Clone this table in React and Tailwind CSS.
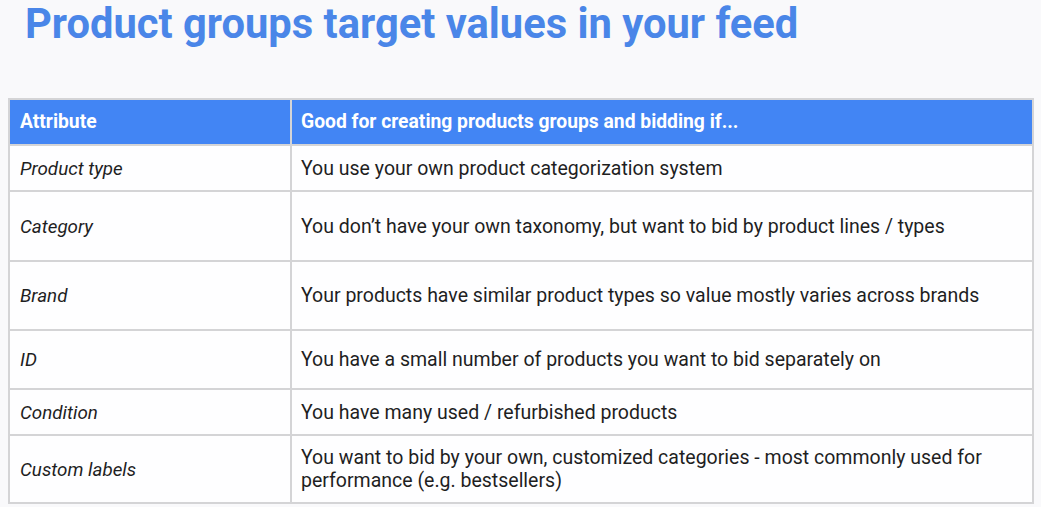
export default function App() {
  const rows = [
    ["Product type", "You use your own product categorization system", "h-[46px]"],
    ["Category", "You don\u2019t have your own taxonomy, but want to bid by product lines / types", "h-[70px]"],
    ["Brand", "Your products have similar product types so value mostly varies across brands", "h-[69px]"],
    ["ID", "You have a small number of products you want to bid separately on", "h-[59px]"],
    ["Condition", "You have many used / refurbished products", "h-[46px]"],
    ["Custom labels", "You want to bid by your own, customized categories - most commonly used for performance (e.g. bestsellers)", "h-[68px]"],
  ];
  return (
    <div className="w-[1041px] h-[507px] bg-[#f9f9fb] overflow-hidden" style={{ fontFamily: "Roboto, 'Liberation Sans', sans-serif" }}>
      <h1 className="pl-[25px] pt-[1px] text-[41.7px] leading-[46px] font-bold text-[#4a86e8]">
        Product groups target values in your feed
      </h1>
      <div className="mt-[51px] ml-[8px] w-[1026px]">
        <table className="w-full border-collapse border-2 border-[#d4d4d6] bg-[#fefeff] text-[19.5px] text-[#1f1f1f]">
          <thead>
            <tr className="h-[46px] bg-[#4285f4] text-white font-bold text-[19.3px]">
              <th className="w-[282px] text-left pl-[10px] border-2 border-[#d4d4d6] font-bold">Attribute</th>
              <th className="text-left pl-[9px] border-2 border-[#d4d4d6] font-bold">Good for creating products groups and bidding if...</th>
            </tr>
          </thead>
          <tbody>
            {rows.map(([a, b, h]) => (
              <tr key={a} className={h}>
                <td className="pl-[10px] pt-[2px] border-2 border-[#d4d4d6] italic text-[18.8px] align-middle">{a}</td>
                <td className="pl-[9px] pr-[40px] border-2 border-[#d4d4d6] align-middle leading-[23px]">{b}</td>
              </tr>
            ))}
          </tbody>
        </table>
      </div>
    </div>
  );
}
